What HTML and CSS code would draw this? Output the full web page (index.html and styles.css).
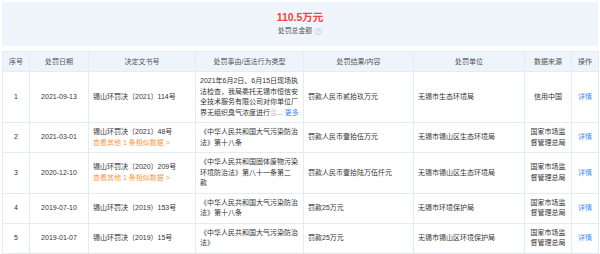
FILE: index.html
```html
<!DOCTYPE html>
<html lang="zh">
<head>
<meta charset="utf-8">
<link rel="stylesheet" href="styles.css">
</head>
<body>
<div class="page">
  <div class="summary">
    <div class="amount">110.5万元</div>
    <div class="label">处罚总金额
      <svg class="info" width="7" height="7" viewBox="0 0 14 14"><circle cx="7" cy="7" r="6.2" fill="none" stroke="#a9c6ea" stroke-width="1.3"/><path d="M5 5.4a2 2 0 1 1 2.8 1.8c-.6.3-.8.7-.8 1.3" fill="none" stroke="#a9c6ea" stroke-width="1.3"/><circle cx="7" cy="10.4" r=".8" fill="#a9c6ea"/></svg>
    </div>
  </div>
  <table class="tbl">
    <colgroup>
      <col style="width:27px"><col style="width:59px"><col style="width:107px"><col style="width:108px"><col style="width:110px"><col style="width:111px"><col style="width:47px"><col style="width:27px">
    </colgroup>
    <thead>
      <tr>
        <th>序号</th><th>处罚日期</th><th>决定文书号</th><th>处罚事由/违法行为类型</th><th>处罚结果/内容</th><th>处罚单位</th><th>数据来源</th><th>操作</th>
      </tr>
    </thead>
    <tbody>
      <tr>
        <td class="c">1</td>
        <td class="c">2021-09-13</td>
        <td>锡山环罚决〔2021〕114号</td>
        <td class="nw">2021年6月2日、6月15日现场执<br>法检查，我局委托无锡市恒信安<br>全技术服务有限公司对你单位厂<br>界无组织臭气浓度进行<span class="fade">监</span><span class="dots">...</span> <a class="blue">更多</a></td>
        <td>罚款人民币贰拾玖万元</td>
        <td>无锡市生态环境局</td>
        <td class="c">信用中国</td>
        <td class="c"><a class="blue">详情</a></td>
      </tr>
      <tr>
        <td class="c">2</td>
        <td class="c">2021-03-01</td>
        <td>锡山环罚决〔2021〕48号<br><a class="orange">查看其他 1 条相似数据 &gt;</a></td>
        <td class="nw">《中华人民共和国大气污染防治<br>法》第十八条</td>
        <td>罚款人民币壹拾伍万元</td>
        <td>无锡市锡山区生态环境局</td>
        <td class="c">国家市场监督管理总局</td>
        <td class="c"><a class="blue">详情</a></td>
      </tr>
      <tr>
        <td class="c">3</td>
        <td class="c">2020-12-10</td>
        <td>锡山环罚决〔2020〕209号<br><a class="orange">查看其他 1 条相似数据 &gt;</a></td>
        <td class="nw">《中华人民共和国固体废物污染<br>环境防治法》第八十一条第二<br>款</td>
        <td>罚款人民币壹拾陆万伍仟元</td>
        <td>无锡市锡山区生态环境局</td>
        <td class="c">国家市场监督管理总局</td>
        <td class="c"><a class="blue">详情</a></td>
      </tr>
      <tr>
        <td class="c">4</td>
        <td class="c">2019-07-10</td>
        <td>锡山环罚决（2019）153号</td>
        <td class="nw">《中华人民共和国大气污染防治<br>法》第十八条</td>
        <td>罚款25万元</td>
        <td>无锡市环境保护局</td>
        <td class="c">国家市场监督管理总局</td>
        <td class="c"><a class="blue">详情</a></td>
      </tr>
      <tr>
        <td class="c">5</td>
        <td class="c">2019-01-07</td>
        <td>锡山环罚决（2019）15号</td>
        <td class="nw">《中华人民共和国大气污染防治<br>法》</td>
        <td>罚款25万元</td>
        <td>无锡市锡山区环境保护局</td>
        <td class="c">国家市场监督管理总局</td>
        <td class="c"><a class="blue">详情</a></td>
      </tr>
    </tbody>
  </table>
</div>
</body>
</html>
```
FILE: styles.css
```css
html, body {
  margin: 0;
  padding: 0;
  background: #fff;
}
body {
  font-family: "Liberation Sans", "Noto Sans CJK SC", sans-serif;
  font-size: 7px;
  color: #333;
}
.page {
  padding: 2px;
}
.summary {
  background: #f0f5fb;
  height: 44px;
  box-sizing: border-box;
  padding-top: 10px;
  text-align: center;
  margin-bottom: 5px;
}
.amount {
  color: #f4423e;
  font-weight: bold;
  font-size: 10.5px;
  line-height: 11px;
}
.label {
  margin-top: 3px;
  line-height: 10px;
  color: #555;
  font-size: 6.8px;
  display: flex;
  justify-content: center;
  align-items: center;
  gap: 3px;
}
.info {
  display: block;
}
.tbl {
  width: 596px;
  table-layout: fixed;
  border-collapse: collapse;
}
.tbl th, .tbl td {
  border: 1px solid #e3ebf5;
  padding: 4px 4px;
  line-height: 10.5px;
  vertical-align: middle;
  text-align: left;
  word-break: break-all;
}
.tbl th {
  background: #edf4fc;
  font-weight: normal;
  color: #555;
  text-align: center;
  line-height: 11px;
}
.tbl td.c {
  text-align: center;
}
.tbl td.nw {
  white-space: nowrap;
  padding-right: 2px;
}
.fade {
  color: #c8c8c8;
}
.dots {
  color: #666;
}
.blue {
  color: #3a8cf0;
}
.orange {
  color: #f59a48;
}
```
